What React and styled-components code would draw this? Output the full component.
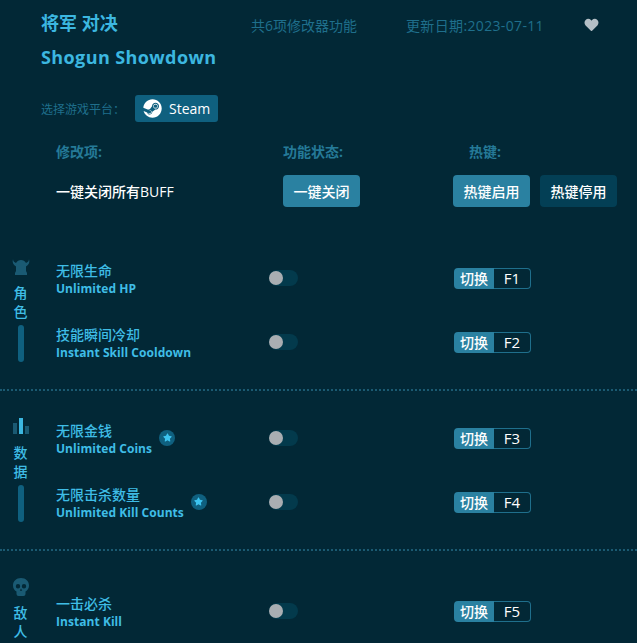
import React from "react"
import styled, { createGlobalStyle } from "styled-components"
import { FaHeart, FaStar, FaSteam } from "react-icons/fa"

const GlobalStyle = createGlobalStyle`
  html, body {
    margin: 0;
    height: 643px;
    overflow: hidden;
    background: #022836;
    font-family: "Open Sans", "Noto Sans CJK SC", sans-serif;
  }
`

const Page = styled.div`
  width: 637px;
  color: #fff;
`

// Header

const Header = styled.header`
  display: flex;
  flex-direction: column;
  padding: 11px 0 0 41px;
`

const TitleRow = styled.div`
  display: flex;
  align-items: center;
  height: 24px;
`

const Title = styled.h1`
  margin: 0;
  font-size: 18px;
  line-height: 24px;
  font-weight: 700;
  color: #3cb7e0;
  width: 210px;
`

const EnTitle = styled(Title)`
  margin-top: 10px;
  width: auto;
  letter-spacing: 0.4px;
`

const Meta = styled.span`
  font-size: 14px;
  color: #1f6f8c;
  white-space: nowrap;
  margin-top: 4px;
  letter-spacing: ${props => props.$spacing || 0}px;
  width: ${props => props.$w}px;
`

const HeartIcon = styled(FaHeart)`
  width: 15px;
  height: 14px;
  margin-top: 3px;
  color: #b4bfc6;
`

const PlatformRow = styled.div`
  display: flex;
  align-items: center;
  margin-top: 26px;
`

const PlatformLabel = styled.span`
  font-size: 12px;
  color: #1f6f8c;
  width: 94px;
`

const PlatformButton = styled.button`
  display: flex;
  align-items: center;
  gap: 7px;
  width: 83px;
  height: 27px;
  padding: 0 0 0 8px;
  border: 0;
  border-radius: 3px;
  background: #0f607f;
  color: #fff;
  font: 14px "Open Sans", sans-serif;
`

// Global controls

const Columns = styled.div`
  display: grid;
  grid-template-columns: 227px 186px auto;
  padding-left: 56px;
`

const HeadRow = styled(Columns)`
  margin-top: 19px;
  font-size: 14px;
  line-height: 22px;
  font-weight: 700;
  color: #257a98;
`

const BuffRow = styled(Columns)`
  margin-top: 12px;
  align-items: center;
  font-size: 14px;
  font-weight: 500;
`

const ActionGroup = styled.div`
  display: flex;
  gap: 10px;
  margin-left: -16px;
`

const ActionButton = styled.button`
  width: 77px;
  height: 32px;
  padding: 0;
  border: 0;
  border-radius: 4px;
  background: ${props => (props.$dim ? "#033f55" : "#2a81a1")};
  color: #fff;
  font: 500 14px "Open Sans", "Noto Sans CJK SC", sans-serif;
`

// Sections

const Section = styled.section`
  display: flex;
  padding: 16px 0 14px;
  border-bottom: ${props => (props.$last ? "0" : "2px dotted #1b5a71")};
  &:first-of-type {
    margin-top: 23px;
    padding-top: 17px;
  }
`

const Side = styled.aside`
  display: flex;
  flex-direction: column;
  align-items: center;
  width: 41px;
  margin-top: 11px;
  flex: none;
`

const SideIcon = styled.svg`
  width: 18px;
  height: 18px;
  margin-bottom: 7px;
`

const SideChar = styled.span`
  font-size: 14px;
  line-height: 19px;
  font-weight: 500;
  color: #3fbde6;
`

const SideBar = styled.i`
  display: block;
  width: 6px;
  height: 37px;
  margin-top: 4px;
  border-radius: 3px;
  background: #0f607f;
`

const Rows = styled.div`
  flex: 1;
  padding-top: ${props => (props.$single ? "13px" : "0")};
`

const Row = styled.div`
  display: grid;
  grid-template-columns: 213px 185px auto;
  align-items: center;
  height: 64px;
  padding-left: 15px;
`

const Name = styled.div`
  display: flex;
  align-items: center;
  gap: 7px;
`

const NameText = styled.div`
  display: flex;
  flex-direction: column;
  color: #3fbde6;
  font-size: 14px;
  font-weight: 500;
  line-height: 17px;
`

const EnName = styled.span`
  font-size: 12px;
  font-weight: 700;
  letter-spacing: 0.05px;
  padding-top: 1px;
`

const Badge = styled.span`
  display: flex;
  align-items: center;
  justify-content: center;
  width: 16px;
  height: 16px;
  border-radius: 50%;
  background: #0f607f;
  color: #3cc4f0;
  font-size: 9px;
  margin-bottom: 3px;
`

const Toggle = styled.span`
  display: block;
  position: relative;
  width: 29px;
  height: 16px;
  margin-bottom: 2px;
  border-radius: 8px;
  background: #033a4c;
`

const Knob = styled.span`
  position: absolute;
  left: 0;
  top: 1px;
  width: 14px;
  height: 14px;
  border-radius: 50%;
  background: #a9aeb2;
`

const KeyBind = styled.div`
  display: flex;
  width: 77px;
  height: 21px;
  margin-bottom: 2px;
  font-size: 14px;
  line-height: 21px;
`

const KeyTag = styled.span`
  width: 40px;
  flex: none;
  text-align: center;
  background: #2a81a1;
  border-radius: 4px 0 0 4px;
  font-weight: 500;
`

const KeyName = styled.span`
  flex: 1;
  text-align: center;
  font-size: 15px;
  line-height: 19px;
  border: 1px solid #1f6f8c;
  border-left: 0;
  border-radius: 0 4px 4px 0;
`

const HelmetIcon = () => (
  <SideIcon viewBox="0 0 18 18" fill="#1a5a73">
    <path d="M1 1c0 2 1 3 3 4 1-2 3-3 5-3s4 1 5 3c2-1 3-2 3-4 1 3 0 6-3 7.500V13l1 2v2H3v-2l1-2V8.500C1 7 0 4 1 1z" />
  </SideIcon>
)

const BarsIcon = () => (
  <SideIcon viewBox="0 0 18 18">
    <rect x="1" y="5" width="4" height="11" fill="#1a5a73" />
    <rect x="7" y="0" width="4" height="16" fill="#3cb7e0" />
    <rect x="13" y="8" width="4" height="8" fill="#1a5a73" />
  </SideIcon>
)

const SkullIcon = () => (
  <SideIcon viewBox="0 0 18 18" fill="#1a5a73">
    <path fillRule="evenodd" d="M9 0c4.800 0 8 3.300 8 7.500 0 2.800-1.300 4.800-3.500 5.900V16a2 2 0 0 1-2 2h-5a2 2 0 0 1-2-2v-2.600C2.300 12.300 1 10.300 1 7.500 1 3.300 4.200 0 9 0zM6 6a2.200 2.200 0 1 0 0 4.400A2.200 2.200 0 0 0 6 6zm6 0a2.200 2.200 0 1 0 0 4.400A2.200 2.200 0 0 0 12 6zM9 10.500l-1.200 2.300h2.400z" />
  </SideIcon>
)

const sections = [
  {
    icon: <HelmetIcon />,
    chars: ["角", "色"],
    bar: true,
    rows: [
      { zh: "无限生命", en: "Unlimited HP", key: "F1" },
      { zh: "技能瞬间冷却", en: "Instant Skill Cooldown", key: "F2" },
    ],
  },
  {
    icon: <BarsIcon />,
    chars: ["数", "据"],
    bar: true,
    rows: [
      { zh: "无限金钱", en: "Unlimited Coins", key: "F3", star: true },
      { zh: "无限击杀数量", en: "Unlimited Kill Counts", key: "F4", star: true },
    ],
  },
  {
    icon: <SkullIcon />,
    chars: ["敌", "人"],
    last: true,
    rows: [{ zh: "一击必杀", en: "Instant Kill", key: "F5" }],
  },
]

export default function App() {
  return (
    <Page>
      <GlobalStyle />
      <Header>
        <TitleRow>
          <Title>将军 对决</Title>
          <Meta $w={155}>共6项修改器功能</Meta>
          <Meta $w={178} $spacing={0.35}>更新日期:2023-07-11</Meta>
          <HeartIcon />
        </TitleRow>
        <EnTitle>Shogun Showdown</EnTitle>
        <PlatformRow>
          <PlatformLabel>选择游戏平台：</PlatformLabel>
          <PlatformButton>
            <FaSteam size={19} />
            Steam
          </PlatformButton>
        </PlatformRow>
      </Header>

      <HeadRow>
        <span>修改项:</span>
        <span>功能状态:</span>
        <span>热键:</span>
      </HeadRow>
      <BuffRow>
        <span>一键关闭所有BUFF</span>
        <span>
          <ActionButton>一键关闭</ActionButton>
        </span>
        <ActionGroup>
          <ActionButton>热键启用</ActionButton>
          <ActionButton $dim>热键停用</ActionButton>
        </ActionGroup>
      </BuffRow>

      {sections.map(section => (
        <Section key={section.chars[0]} $last={section.last}>
          <Side>
            {section.icon}
            {section.chars.map(c => (
              <SideChar key={c}>{c}</SideChar>
            ))}
            {section.bar && <SideBar />}
          </Side>
          <Rows $single={section.last}>
            {section.rows.map(row => (
              <Row key={row.key}>
                <Name>
                  <NameText>
                    <span>{row.zh}</span>
                    <EnName>{row.en}</EnName>
                  </NameText>
                  {row.star && (
                    <Badge>
                      <FaStar />
                    </Badge>
                  )}
                </Name>
                <Toggle>
                  <Knob />
                </Toggle>
                <KeyBind>
                  <KeyTag>切换</KeyTag>
                  <KeyName>{row.key}</KeyName>
                </KeyBind>
              </Row>
            ))}
          </Rows>
        </Section>
      ))}
    </Page>
  )
}
